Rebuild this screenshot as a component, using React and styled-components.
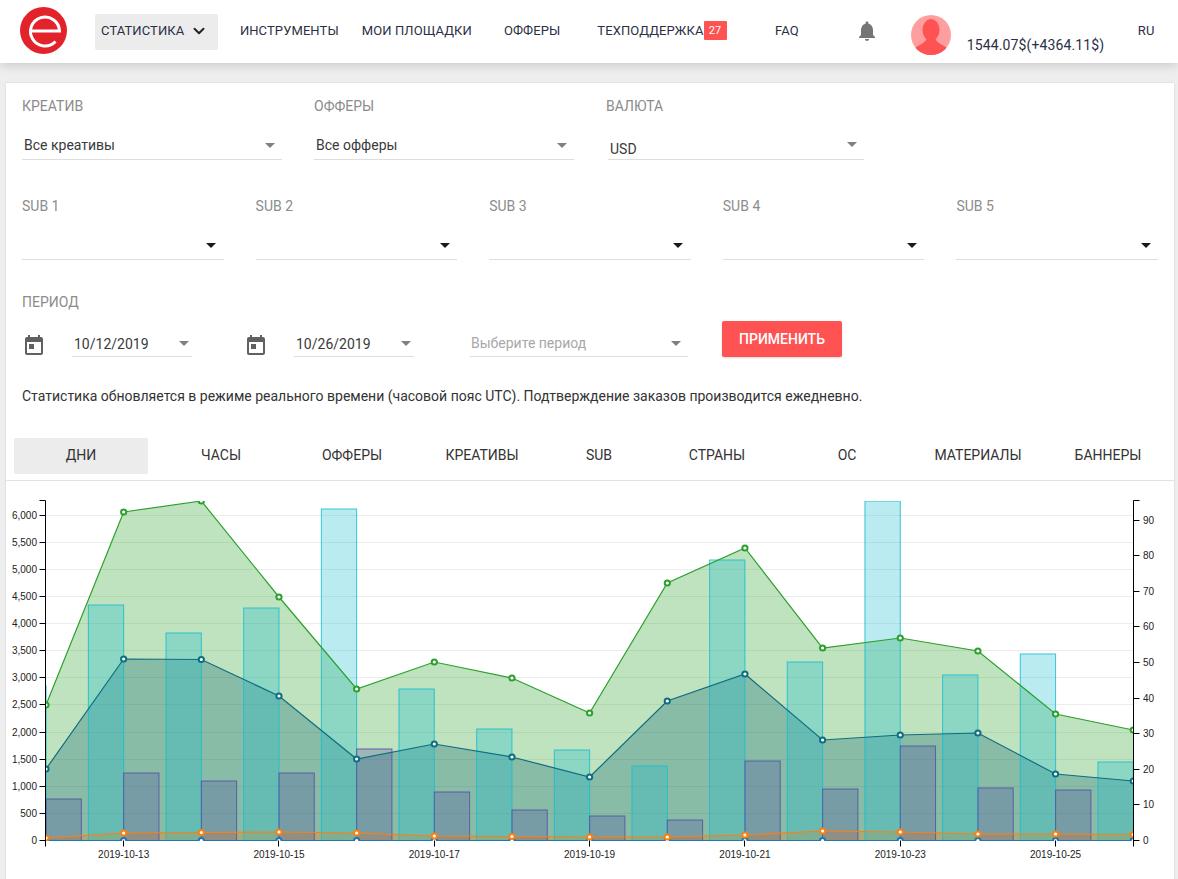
import React from 'react';
import styled, { createGlobalStyle } from 'styled-components';
import { ChevronDown } from 'lucide-react';

const GlobalStyle = createGlobalStyle`
  html, body {
    margin: 0;
    padding: 0;
    height: 879px;
    overflow: hidden;
    background: #eeeeee;
    font-family: Roboto, "Liberation Sans", sans-serif;
  }
`;

const Header = styled.header`
  display: flex;
  align-items: center;
  height: 63px;
  padding-left: 20px;
  background: #fff;
  box-shadow: 0 2px 10px rgba(0, 0, 0, 0.16);
  position: relative;
`;

const NavItem = styled.div`
  display: flex;
  align-items: center;
  box-sizing: border-box;
  height: 36px;
  margin-left: ${(p) => p.$ml}px;
  padding: 0 ${(p) => (p.$active ? '6px' : '0')} 2px;
  border-radius: 2px;
  background: ${(p) => (p.$active ? '#ececec' : 'transparent')};
  font-size: 13px;
  letter-spacing: 0.1px;
  color: #2b2f45;
  white-space: nowrap;
`;

const Badge = styled.span`
  display: inline-flex;
  align-items: center;
  justify-content: center;
  width: 23px;
  height: 19px;
  background: #ff5252;
  color: #fff;
  font-size: 11px;
  border-radius: 1px;
`;

const Balance = styled.div`
  margin-left: 16px;
  width: 171px;
  padding-top: 26px;
  font-size: 14px;
  letter-spacing: 0.12px;
  color: #2b2f45;
  white-space: nowrap;
  line-height: 20px;
`;

const Card = styled.main`
  margin: 20px 4px 0 6px;
  padding-top: 15px;
  height: 781px;
  background: #fff;
  box-shadow: 0 0 2px rgba(0, 0, 0, 0.14);
  overflow: hidden;
`;

const Filters = styled.section`
  padding: 0 16px;
`;

const FilterGrid = styled.div`
  display: grid;
  grid-template-columns: ${(p) => p.$cols};
  column-gap: 32px;
  margin-bottom: ${(p) => p.$mb || 0}px;
`;

const Label = styled.div`
  font-size: 14px;
  line-height: 16px;
  color: #8c8c8c;
  margin-bottom: ${(p) => (p.$mb === undefined ? 14 : p.$mb)}px;
`;

const Select = styled.div`
  position: relative;
  display: flex;
  align-items: center;
  box-sizing: border-box;
  height: 32px;
  padding: ${(p) => p.$pt || 2}px 0 0 ${(p) => p.$pl || 2}px;
  width: ${(p) => (p.$w ? `${p.$w}px` : 'auto')};
  margin-left: ${(p) => p.$ml || 0}px;
  border-bottom: 1px solid #dedede;
  font-size: 14px;
  color: ${(p) => p.$color || '#3a3a3a'};
  &::after {
    content: '';
    position: absolute;
    right: ${(p) => p.$right || 7.5}px;
    top: ${(p) => p.$arrowTop || 15}px;
    border-left: 5.5px solid transparent;
    border-right: 5.5px solid transparent;
    border-top: 5.5px solid ${(p) => (p.$dark ? '#1a1a1a' : '#808080')};
  }
`;

const PeriodRow = styled.div`
  display: flex;
  align-items: flex-end;
  height: 36px;
`;

const DateIcon = styled.svg`
  width: 24px;
  height: 24px;
  fill: #606060;
  margin: 0 26px -1px ${(p) => p.$ml || 0}px;
  flex: none;
`;

const ApplyButton = styled.button`
  width: 120px;
  height: 36px;
  margin-left: 34px;
  border: 0;
  border-radius: 2px;
  background: #ff5252;
  color: #fff;
  font: 500 14px Roboto, "Liberation Sans", sans-serif;
  box-shadow: 0 1px 2px rgba(0, 0, 0, 0.15);
`;

const Note = styled.p`
  margin: 29px 0 32px;
  font-size: 14px;
  line-height: 20px;
  color: #333;
`;

const Tabs = styled.nav`
  display: flex;
  padding: 0 0 6px 8px;
  border-bottom: 1px solid #e2e2e2;
`;

const Tab = styled.div`
  display: flex;
  align-items: center;
  justify-content: center;
  flex: none;
  box-sizing: border-box;
  width: ${(p) => p.$w}px;
  height: 36px;
  padding-bottom: 2px;
  border-radius: 2px;
  background: ${(p) => (p.$active ? '#ececec' : 'transparent')};
  font-size: 14px;
  color: #333;
`;

const ChartSvg = styled.svg`
  display: block;
  width: 1168px;
  height: 398px;
`;

const AxisText = styled.text`
  font: 10px "Liberation Sans", Arial, sans-serif;
  fill: #222;
`;

const days = 15;
const X0 = 46;
const STEP = 77.66;
const BAR = 35.3;
const BASE = 840.5;
const xAt = (i) => X0 + i * STEP;
const crisp = (v) => Math.round(v - 0.5) + 0.5;

const green = [705, 512, 501, 597, 689, 662, 678, 713, 583, 548, 648, 638, 651, 714, 730];
const teal = [769, 659, 659.5, 696, 759, 744, 757, 777, 701, 674, 740, 735, 733, 774, 781];
const orange = [838, 833, 832.5, 832, 833, 836, 836.5, 837, 837, 835, 831, 832, 834, 834, 834.5];
const cyanBars = [605, 633, 608, 509, 689, 729, 750, 766, 560, 662, 501, 675, 654, 762];
const purpleBars = [799, 773, 781, 773, 749, 792, 810, 816, 820, 761, 789, 746, 788, 790];

const pts = (ys) => ys.map((y, i) => `${xAt(i)},${y}`).join(' ');
const area = (ys) => `${X0},${BASE} ${pts(ys)} ${xAt(days - 1)},${BASE}`;

const Series = ({ ys, color }) => (
  <>
    <polyline points={pts(ys)} fill="none" stroke={color} strokeWidth="1.2" />
    {ys.map((y, i) => (
      <circle key={i} cx={xAt(i)} cy={y} r="2.6" fill="#fff" stroke={color} strokeWidth="2" />
    ))}
  </>
);

const Chart = () => {
  const leftTicks = [0, 500, 1000, 1500, 2000, 2500, 3000, 3500, 4000, 4500, 5000, 5500, 6000];
  const rightTicks = [0, 10, 20, 30, 40, 50, 60, 70, 80, 90];
  const dates = ['13', '15', '17', '19', '21', '23', '25'];
  const leftY = (v) => BASE - (v / 500) * 27.12;
  const rightY = (v) => BASE - v * 3.56;
  const axisL = 45.5;
  const axisR = 1133.5;

  return (
    <ChartSvg viewBox="6 481 1168 398">
      <defs>
        <clipPath id="plot">
          <rect x={axisL} y="501" width={axisR - axisL} height={BASE - 501 + 0.5} />
        </clipPath>
      </defs>

      {leftTicks.slice(1).map((v) => (
        <line key={v} x1={axisL} x2={axisR} y1={crisp(leftY(v))} y2={crisp(leftY(v))} stroke="#ececec" />
      ))}

      <g clipPath="url(#plot)">
        <polygon points={area(green)} fill="#2ca02c" fillOpacity="0.3" />
        <polygon points={area(teal)} fill="#0b6272" fillOpacity="0.3" />
        <polygon points={area(orange)} fill="#ff7f0e" fillOpacity="0.3" />

        {cyanBars.map((top, i) => (
          <rect
            key={i}
            x={xAt(i + 1) - BAR}
            y={top}
            width={BAR}
            height={BASE - top}
            fill="#17becf"
            fillOpacity="0.3"
            stroke="#17becf"
            strokeOpacity="0.85"
          />
        ))}
        <rect x={X0 - BAR} y="686" width={BAR} height="155" fill="#17becf" fillOpacity="0.3" stroke="#17becf" />
        {purpleBars.map((top, i) => (
          <rect
            key={i}
            x={xAt(i)}
            y={top}
            width={BAR}
            height={BASE - top}
            fill="#5254a3"
            fillOpacity="0.3"
            stroke="#5254a3"
            strokeOpacity="0.85"
          />
        ))}

        <Series ys={green} color="#2ca02c" />
        <Series ys={teal} color="#0e6e80" />
        <Series ys={Array(days).fill(BASE)} color="#1f77b4" />
        <Series ys={orange} color="#ff7f0e" />
      </g>

      <g stroke="#000" fill="none">
        <path d={`M39.5 500.5H${axisL}V846.5`} />
        <path d={`M${axisR} 846.5V500.5H1139.5`} />
        <path d={`M39.5 ${BASE}H${axisL}M${axisR} ${BASE}H1139.5`} />
        {leftTicks.slice(1).map((v) => (
          <line key={v} x1="39.5" x2={axisL} y1={crisp(leftY(v))} y2={crisp(leftY(v))} />
        ))}
        {rightTicks.slice(1).map((v) => (
          <line key={v} x1={axisR} x2="1139.5" y1={crisp(rightY(v))} y2={crisp(rightY(v))} />
        ))}
        {dates.map((d, i) => (
          <line key={d} x1={crisp(xAt(1 + i * 2))} x2={crisp(xAt(1 + i * 2))} y1={BASE} y2="846.5" />
        ))}
      </g>

      {leftTicks.map((v) => (
        <AxisText key={v} x="37" y={leftY(v) + 3.5} textAnchor="end">
          {v.toLocaleString('en-US')}
        </AxisText>
      ))}
      {rightTicks.map((v) => (
        <AxisText key={v} x="1143" y={rightY(v) + 3.5}>
          {v}
        </AxisText>
      ))}
      {dates.map((d, i) => (
        <AxisText key={d} x={xAt(1 + i * 2)} y="857.5" textAnchor="middle">
          {`2019-10-${d}`}
        </AxisText>
      ))}
    </ChartSvg>
  );
};

const CalendarIcon = ({ ml }) => (
  <DateIcon viewBox="0 0 24 24" $ml={ml}>
    <path d="M19 3h-1V1h-2v2H8V1H6v2H5c-1.11 0-1.99.9-1.99 2L3 19c0 1.1.89 2 2 2h14c1.1 0 2-.9 2-2V5c0-1.1-.9-2-2-2zm0 16H5V8h14v11zM7 10h5v5H7z" />
  </DateIcon>
);

const Logo = () => (
  <svg width="47" height="47" viewBox="0 0 47 47" style={{ flex: 'none', marginBottom: 2 }}>
    <circle cx="23.5" cy="23.5" r="23.5" fill="#e2232b" />
    <path
      d="M10.5 24H39.5A14.5 14.5 0 1 0 35.5 34.5"
      fill="none"
      stroke="#fff"
      strokeWidth="3"
    />
  </svg>
);

const Bell = () => (
  <svg width="24" height="24" viewBox="0 0 24 24" fill="#757575" style={{ marginLeft: 56, marginBottom: 1, flex: 'none' }}>
    <path d="M12 22c1.1 0 2-.9 2-2h-4c0 1.1.89 2 2 2zm6-6v-5c0-3.07-1.64-5.64-4.5-6.32V4c0-.83-.67-1.5-1.5-1.5s-1.5.67-1.5 1.5v.68C7.63 5.36 6 7.92 6 11v5l-2 2v1h16v-1l-2-2z" />
  </svg>
);

const Avatar = () => (
  <svg width="40" height="40" viewBox="0 0 40 40" style={{ marginLeft: 32, marginTop: 6, flex: 'none' }}>
    <defs>
      <clipPath id="avatar">
        <circle cx="20" cy="20" r="20" />
      </clipPath>
    </defs>
    <circle cx="20" cy="20" r="20" fill="#ff9e9e" />
    <g clipPath="url(#avatar)" fill="#ff5252">
      <ellipse cx="20" cy="15" rx="8.5" ry="11" />
      <path d="M3 34C8 29 14 29 16 23H24C26 29 32 29 37 34V40H3Z" />
    </g>
  </svg>
);

const TABS = [
  ['ДНИ', 134],
  ['ЧАСЫ', 146],
  ['ОФФЕРЫ', 116],
  ['КРЕАТИВЫ', 144],
  ['SUB', 90],
  ['СТРАНЫ', 146],
  ['ОС', 114],
  ['МАТЕРИАЛЫ', 148],
  ['БАННЕРЫ', 112],
];

export default function App() {
  return (
    <>
      <GlobalStyle />
      <Header>
        <Logo />
        <NavItem $active $ml={28}>
          СТАТИСТИКА
          <ChevronDown size={18} strokeWidth={2.6} color="#222" style={{ marginLeft: 6, marginRight: 4 }} />
        </NavItem>
        <NavItem $ml={21.5}>ИНСТРУМЕНТЫ</NavItem>
        <NavItem $ml={23}>МОИ ПЛОЩАДКИ</NavItem>
        <NavItem $ml={32}>ОФФЕРЫ</NavItem>
        <NavItem $ml={37}>
          ТЕХПОДДЕРЖКА
          <Badge>27</Badge>
        </NavItem>
        <NavItem $ml={48.5}>FAQ</NavItem>
        <Bell />
        <Avatar />
        <Balance>1544.07$(+4364.11$)</Balance>
        <NavItem $ml={0}>RU</NavItem>
      </Header>

      <Card>
        <Filters>
          <FilterGrid $cols="260px 260px 258px" $mb={38}>
            <div>
              <Label>КРЕАТИВ</Label>
              <Select>Все креативы</Select>
            </div>
            <div>
              <Label>ОФФЕРЫ</Label>
              <Select>Все офферы</Select>
            </div>
            <div>
              <Label>ВАЛЮТА</Label>
              <Select $pt={10} $pl={2} $arrowTop={14} $ml={2}>
                USD
              </Select>
            </div>
          </FilterGrid>

          <FilterGrid $cols="repeat(5, 1fr)" $mb={34}>
            {['SUB 1', 'SUB 2', 'SUB 3', 'SUB 4', 'SUB 5'].map((s) => (
              <div key={s}>
                <Label>{s}</Label>
                <Select $dark />
              </div>
            ))}
          </FilterGrid>

          <Label $mb={11}>ПЕРИОД</Label>
          <PeriodRow>
            <CalendarIcon />
            <Select $w={120} $pt={6} $arrowTop={16} $right={3}>10/12/2019</Select>
            <CalendarIcon ml={52} />
            <Select $w={120} $pt={6} $arrowTop={16} $right={3}>10/26/2019</Select>
            <Select $w={218} $ml={56} $pt={5} $pl={1} $arrowTop={16} $color="#a8a8a8">Выберите период</Select>
            <ApplyButton>ПРИМЕНИТЬ</ApplyButton>
          </PeriodRow>

          <Note>
            Статистика обновляется в режиме реального времени (часовой пояс UTC). Подтверждение заказов производится ежедневно.
          </Note>
        </Filters>

        <Tabs>
          {TABS.map(([name, w], i) => (
            <Tab key={name} $w={w} $active={i === 0}>
              {name}
            </Tab>
          ))}
        </Tabs>
        <Chart />
      </Card>
    </>
  );
}
